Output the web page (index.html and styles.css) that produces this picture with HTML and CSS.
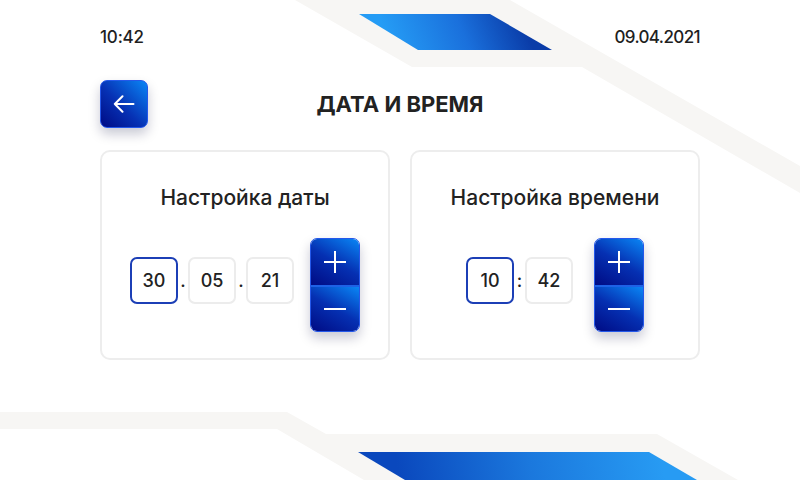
FILE: index.html
```html
<!DOCTYPE html>
<html lang="ru">
<head>
<meta charset="utf-8">
<title>Дата и время</title>
<link rel="stylesheet" href="styles.css">
</head>
<body>
<div class="screen">
  <svg class="bg" width="800" height="480" viewBox="0 0 800 480" aria-hidden="true">
    <defs>
      <linearGradient id="gTop" gradientUnits="userSpaceOnUse" x1="395" y1="55" x2="515" y2="5">
        <stop offset="0" stop-color="#259cf5"/>
        <stop offset="0.55" stop-color="#1a70dc"/>
        <stop offset="1" stop-color="#0a3ca8"/>
      </linearGradient>
      <linearGradient id="gBot" gradientUnits="userSpaceOnUse" x1="400" y1="485" x2="660" y2="445">
        <stop offset="0" stop-color="#0a48bd"/>
        <stop offset="0.5" stop-color="#1b78dd"/>
        <stop offset="1" stop-color="#279bf3"/>
      </linearGradient>
    </defs>
    <polygon class="band" points="295,0 510,0 800,166 800,193 582,67 412,67"/>
    <polygon points="359,14 490,14 552,50 418,50" fill="url(#gTop)"/>
    <polygon class="band" points="0,412 287,412 326,434 657,434 738,480 364,480 277,429 0,429"/>
    <polygon points="358,452 649,452 697,480 405,480" fill="url(#gBot)"/>
  </svg>

  <div class="content">
    <header class="status">
      <span>10:42</span>
      <span class="status-date">09.04.2021</span>
    </header>

    <div class="titlebar">
      <button class="btn back" type="button" aria-label="Назад">
        <svg width="22" height="18" viewBox="0 0 22 18"><path d="M20.5 9H1.8M9.5 1.2L1.8 9l7.7 7.8" fill="none" stroke="#fff" stroke-width="2" stroke-linecap="round" stroke-linejoin="round"/></svg>
      </button>
      <h1 class="title">ДАТА И ВРЕМЯ</h1>
      <span></span>
    </div>

    <div class="cards">
      <section class="card">
        <h2 class="card-title">Настройка даты</h2>
        <div class="controls controls-date">
          <div class="fields">
            <div class="field field-active">30</div>
            <span class="sep">.</span>
            <div class="field">05</div>
            <span class="sep">.</span>
            <div class="field">21</div>
          </div>
          <div class="stepper">
            <button class="step" type="button" aria-label="Плюс">
              <svg width="24" height="24" viewBox="0 0 24 24"><path d="M12 1v22M1 12h22" stroke="#fff" stroke-width="2"/></svg>
            </button>
            <button class="step step-down" type="button" aria-label="Минус">
              <svg width="24" height="24" viewBox="0 0 24 24"><path d="M1 12h22" stroke="#fff" stroke-width="2"/></svg>
            </button>
          </div>
        </div>
      </section>

      <section class="card">
        <h2 class="card-title">Настройка времени</h2>
        <div class="controls controls-time">
          <div class="fields">
            <div class="field field-active">10</div>
            <span class="sep">:</span>
            <div class="field">42</div>
          </div>
          <div class="stepper">
            <button class="step" type="button" aria-label="Плюс">
              <svg width="24" height="24" viewBox="0 0 24 24"><path d="M12 1v22M1 12h22" stroke="#fff" stroke-width="2"/></svg>
            </button>
            <button class="step step-down" type="button" aria-label="Минус">
              <svg width="24" height="24" viewBox="0 0 24 24"><path d="M1 12h22" stroke="#fff" stroke-width="2"/></svg>
            </button>
          </div>
        </div>
      </section>
    </div>
  </div>
</div>
</body>
</html>
```

FILE: styles.css
```css
html, body {
  margin: 0;
  padding: 0;
  background: #fff;
}

.screen {
  width: 800px;
  height: 480px;
  position: relative;
  overflow: hidden;
  background: #fff;
  font-family: Inter, "Noto Sans", sans-serif;
  color: #1f1f1f;
}

.bg {
  position: absolute;
  left: 0;
  top: 0;
  z-index: 0;
}

.band {
  fill: #f7f6f4;
}

.content {
  position: relative;
  z-index: 1;
  padding: 26px 100px 0;
}

.status {
  display: flex;
  justify-content: space-between;
  font-size: 17px;
  line-height: 22px;
  font-weight: 500;
  letter-spacing: -0.2px;
}

.status-date {
  letter-spacing: -0.6px;
}

.titlebar {
  display: grid;
  grid-template-columns: 48px 1fr 48px;
  align-items: center;
  height: 48px;
  margin-top: 32px;
}

.title {
  margin: 0;
  text-align: center;
  font-size: 22px;
  font-weight: 700;
  line-height: 26px;
  color: #222;
}

.btn {
  border: 1px solid #2458ea;
  padding: 0;
  cursor: pointer;
  background: linear-gradient(45deg, #000b84 0%, #0631b4 45%, #0a86f5 100%);
}

.back {
  width: 48px;
  height: 48px;
  border-radius: 7px;
  display: flex;
  align-items: center;
  justify-content: center;
  box-shadow: 0 6px 12px rgba(0, 10, 60, 0.22);
}

.cards {
  display: grid;
  grid-template-columns: 1fr 1fr;
  gap: 20px;
  margin-top: 22px;
}

.card {
  height: 210px;
  box-sizing: border-box;
  border: 2px solid #ededed;
  border-radius: 10px;
  padding-top: 33px;
  display: flex;
  flex-direction: column;
  align-items: center;
}

.card-title {
  margin: 0;
  font-size: 21px;
  font-weight: 500;
  line-height: 26px;
  color: #222;
}

.controls {
  display: flex;
  align-items: flex-start;
  gap: 16px;
  margin-top: 27px;
}

.controls-time {
  gap: 21px;
}

.fields {
  display: flex;
  align-items: center;
  margin-top: 19px;
}

.field {
  width: 48px;
  height: 47px;
  box-sizing: border-box;
  border: 2px solid #ececec;
  border-radius: 7px;
  display: flex;
  align-items: center;
  justify-content: center;
  font-size: 18px;
  font-weight: 500;
  color: #222;
}

.field-active {
  border-color: #1c3fb6;
}

.sep {
  width: 10px;
  text-align: center;
  font-size: 18px;
  font-weight: 500;
  line-height: 22px;
}

.controls-time .sep {
  width: 11px;
}

.stepper {
  width: 48px;
  display: flex;
  flex-direction: column;
  border: 1px solid #2458ea;
  border-radius: 7px;
  overflow: hidden;
  box-shadow: 0 6px 12px rgba(0, 10, 60, 0.22);
}

.step {
  height: 46px;
  border: none;
  padding: 0;
  display: flex;
  align-items: center;
  justify-content: center;
  background: linear-gradient(30deg, #000b84 0%, #0530b2 50%, #0a86f5 100%);
}

.step-down {
  border-top: 2px solid #1e62e6;
}
```
